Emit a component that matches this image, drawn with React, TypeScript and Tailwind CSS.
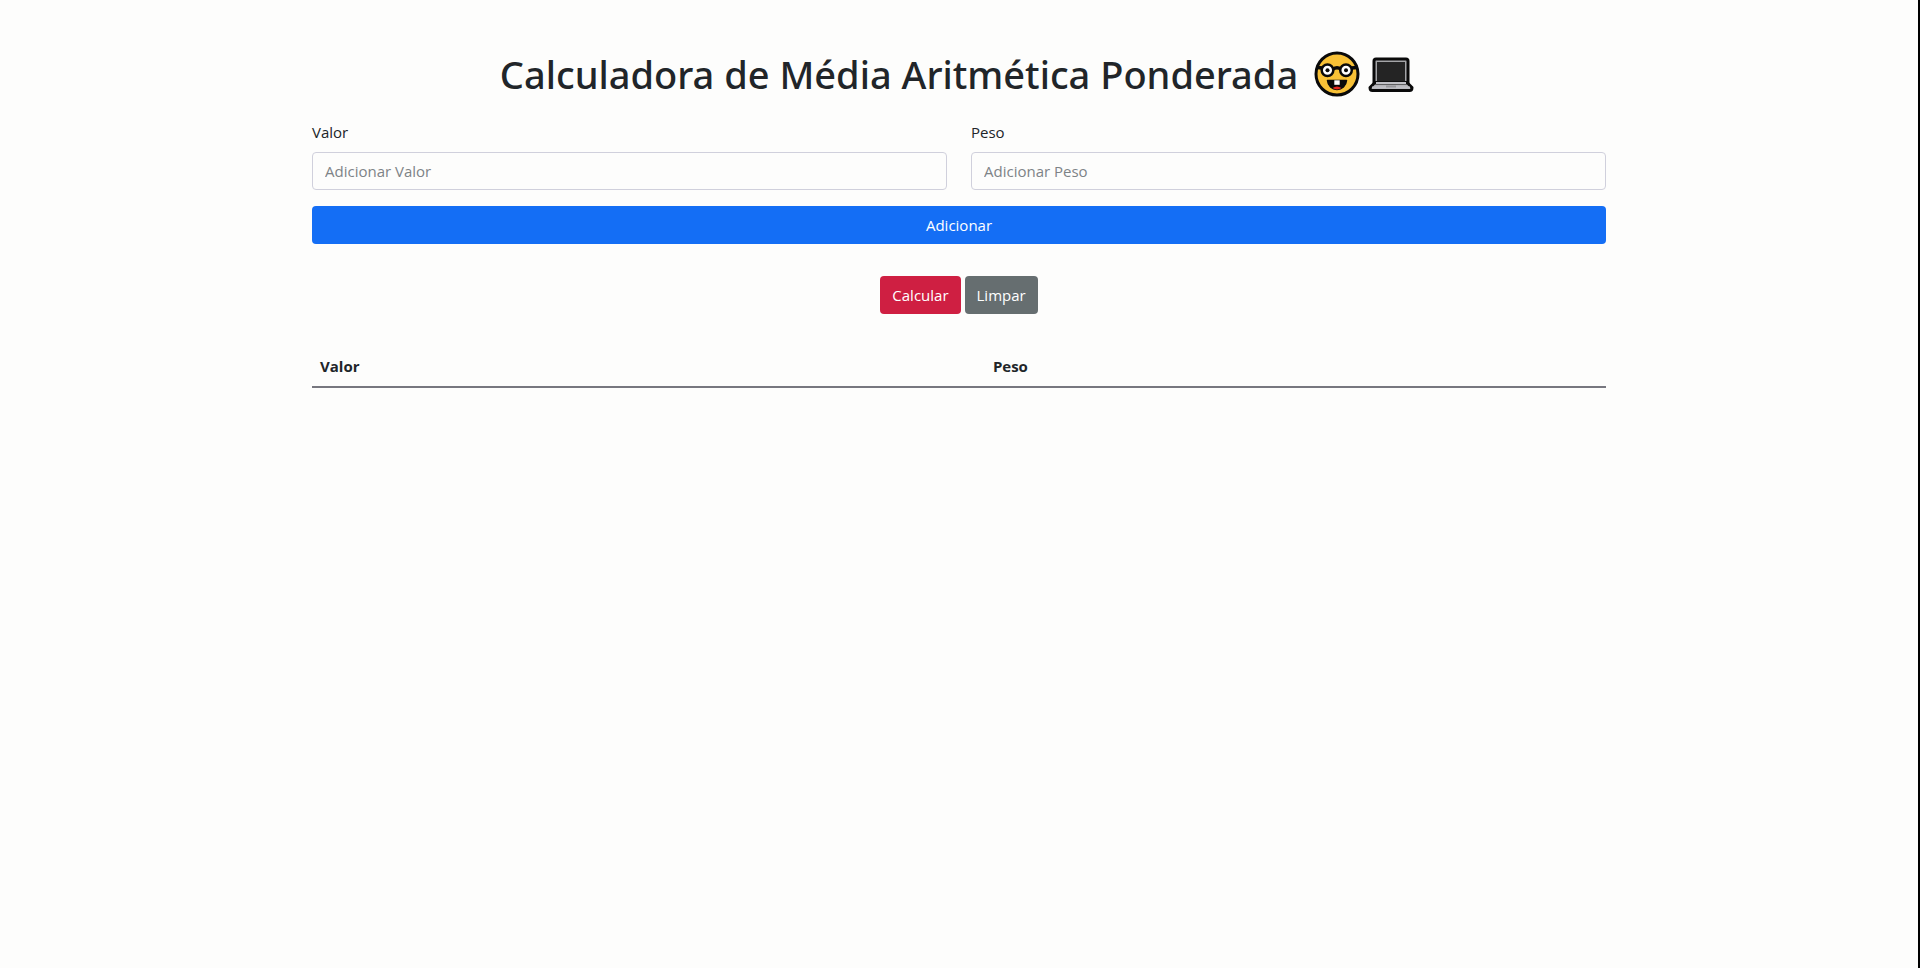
import { useState, type FormEvent } from "react";

type Entry = { value: string; weight: string };

function NerdFace() {
  return (
    <svg viewBox="0 0 46 46" className="size-[46px]" role="img" aria-label="Nerd">
      <circle cx="23" cy="23" r="21" fill="#f8c136" stroke="#0a0a0a" strokeWidth="3" />
      <path d="M2.500 16.500 L9 17 M37 17 L43.500 16.500 M19 18 Q23 15.500 27 18" fill="none" stroke="#0a0a0a" strokeWidth="3.500" />
      <circle cx="13.500" cy="19.300" r="5.800" fill="#fff" stroke="#0a0a0a" strokeWidth="2.500" />
      <circle cx="32" cy="19.300" r="5.800" fill="#fff" stroke="#0a0a0a" strokeWidth="2.500" />
      <circle cx="13.500" cy="19.300" r="2" fill="#0a0a0a" />
      <circle cx="32" cy="19.300" r="2" fill="#0a0a0a" />
      <path d="M13.500 29.500 H32.500 C32 35 28 38.500 23 38.500 C18 38.500 14 35 13.500 29.500 Z" fill="#0a0a0a" stroke="#0a0a0a" strokeWidth="1.500" strokeLinejoin="round" />
      <path d="M18.500 37 Q23 34 27.500 37 Q23 39.800 18.500 37 Z" fill="#e8281e" />
      <rect x="20.300" y="29.300" width="5.400" height="4.500" fill="#fff" />
    </svg>
  );
}

function Laptop() {
  return (
    <svg viewBox="0 0 46 46" className="size-[46px]" role="img" aria-label="Laptop">
      <path d="M8 8 H38 Q40 8 40 10 V31.500 H6 V10 Q6 8 8 8 Z" fill="#a4a5a8" stroke="#0a0a0a" strokeWidth="3" />
      <rect x="9" y="11" width="28" height="19.500" fill="#242424" />
      <path d="M6.500 32 H39.500 L44 36.500 Q44 39.500 41.500 39.500 H4.500 Q2 39.500 2 36.500 Z" fill="#b4b4b8" stroke="#0a0a0a" strokeWidth="3" strokeLinejoin="round" />
      <path d="M8 32 H38 M4 36.500 H42" stroke="#c0c0c5" strokeWidth="2" />
      <path d="M18 35.500 H28" stroke="#96969a" strokeWidth="2" />
    </svg>
  );
}

type FieldProps = { id: string; label: string; placeholder: string; value: string; onChange: (v: string) => void };

function Field({ id, label, placeholder, value, onChange }: FieldProps) {
  return (
    <div className="flex min-w-0 flex-1 flex-col gap-2">
      <label htmlFor={id}>{label}</label>
      <input
        id={id}
        type="text"
        inputMode="decimal"
        placeholder={placeholder}
        value={value}
        onChange={(e) => onChange(e.target.value)}
        className="w-full rounded border border-[#d0d0dc] bg-transparent px-3 py-[6px] leading-6 outline-none placeholder:text-[#7d8387] focus:border-[#86b7fe]"
      />
    </div>
  );
}

export default function App() {
  const [value, setValue] = useState("");
  const [weight, setWeight] = useState("");
  const [entries, setEntries] = useState<Entry[]>([]);
  const [average, setAverage] = useState<number | null>(null);

  const add = (e: FormEvent) => {
    e.preventDefault();
    if (!value || !weight) return;
    setEntries([...entries, { value, weight }]);
    setValue("");
    setWeight("");
  };

  const calculate = () => {
    const total = entries.reduce((sum, row) => sum + Number(row.weight), 0);
    if (total) setAverage(entries.reduce((sum, row) => sum + Number(row.value) * Number(row.weight), 0) / total);
  };

  const clear = () => {
    setEntries([]);
    setAverage(null);
  };

  return (
    <div className="min-h-screen border-r-2 border-black bg-[#fdfdfc] px-3 pt-[50px] pb-12 font-['Open_Sans','Noto_Sans',sans-serif] text-[15px] leading-6 text-[#212529]">
      <main className="mx-auto w-full max-w-[1294px]">
        <h1 className="flex flex-wrap items-center justify-center pr-1 font-['Noto_Sans','Open_Sans',sans-serif] text-[38px] font-medium leading-[48px]">
          <span>Calculadora de Média Aritmética Ponderada</span>
          <span className="ml-4 flex gap-2">
            <NerdFace />
            <Laptop />
          </span>
        </h1>

        <form onSubmit={add} className="mt-[22px] flex flex-col gap-4">
          <div className="flex gap-6">
            <Field id="value" label="Valor" placeholder="Adicionar Valor" value={value} onChange={setValue} />
            <Field id="weight" label="Peso" placeholder="Adicionar Peso" value={weight} onChange={setWeight} />
          </div>
          <button type="submit" className="w-full rounded bg-[#146ef5] px-3 py-[7px] text-white">
            Adicionar
          </button>
        </form>

        <div className="mt-8 flex justify-center gap-1">
          <button type="button" onClick={calculate} className="rounded bg-[#cf1f42] px-3 py-[7px] text-white">
            Calcular
          </button>
          <button type="button" onClick={clear} className="rounded bg-[#666e70] px-3 py-[7px] text-white">
            Limpar
          </button>
        </div>

        <table className="mt-8 w-full border-collapse text-left">
          <thead className="border-b-2 border-[#77777f]">
            <tr>
              <th className="w-[52%] p-2 font-bold">Valor</th>
              <th className="p-2 font-bold">Peso</th>
            </tr>
          </thead>
          <tbody>
            {entries.map((row, i) => (
              <tr key={i} className="border-b border-[#dee2e6]">
                <td className="p-2">{row.value}</td>
                <td className="p-2">{row.weight}</td>
              </tr>
            ))}
          </tbody>
        </table>
        {average !== null && <p className="mt-4 text-center">{average.toFixed(2)}</p>}
      </main>
    </div>
  );
}
